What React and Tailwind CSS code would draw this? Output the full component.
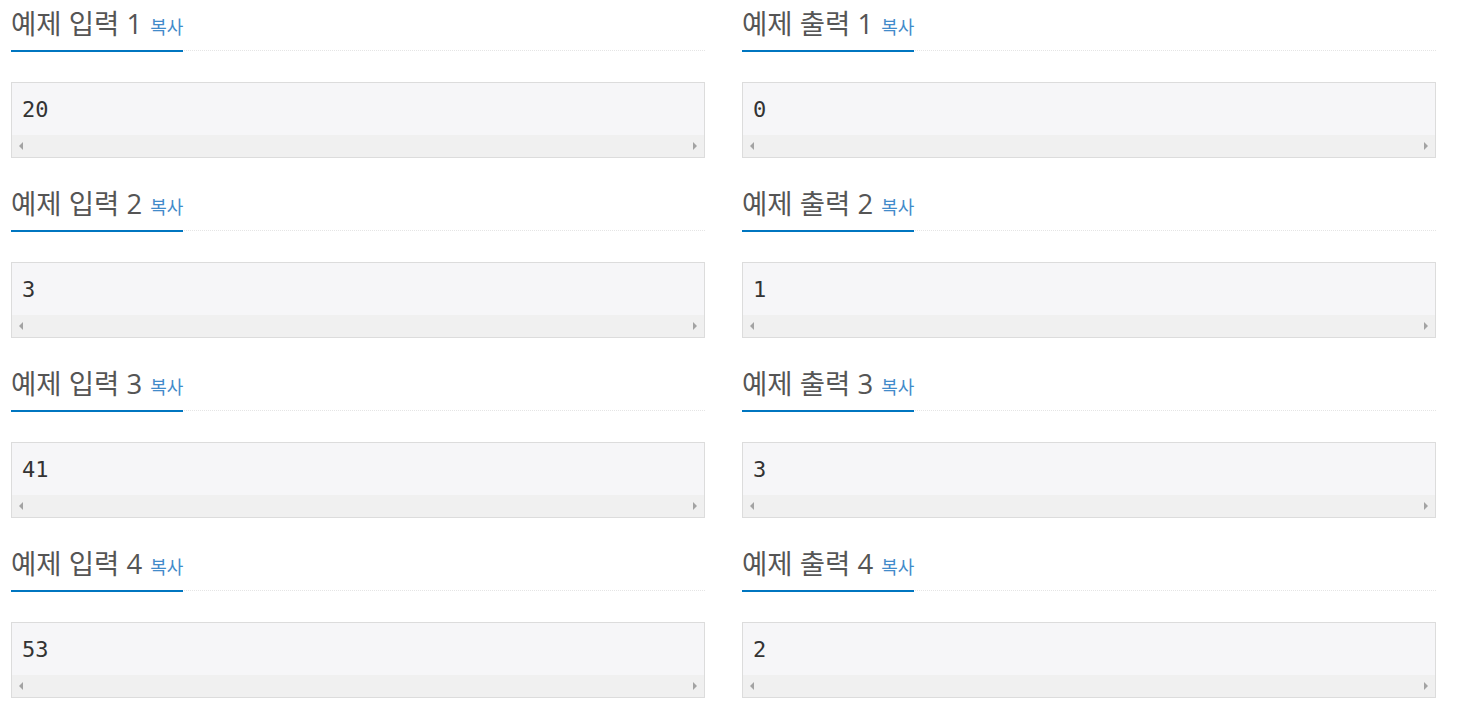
const samples = [
  { input: "20", output: "0" },
  { input: "3", output: "1" },
  { input: "41", output: "3" },
  { input: "53", output: "2" },
];

function Headline({ title }) {
  return (
    <div className="flex items-end h-[51px] border-b border-dotted border-[#e5e5e5]">
      <h2 className="flex items-baseline border-b-[2px] border-[#0076c0] -mb-[2px] pb-[9px]">
        <span className="text-[27.5px] leading-[32px] text-[#555]">{title}</span>
        <span className="ml-[8px] text-[18px] text-[#428bca]">복사</span>
      </h2>
    </div>
  );
}

function Pre({ text }) {
  return (
    <div className="mt-[31px] border border-[#dcdcdc] bg-[#f6f6f8]">
      <div
        className="h-[52px] pl-[10px] pt-[13px] text-[22px] leading-[28px] text-[#333]"
        style={{ fontFamily: '"DejaVu Sans Mono", "Liberation Mono", monospace' }}
      >
        {text}
      </div>
      <div className="flex items-center justify-between h-[22px] bg-[#f0f0f0] px-[7px]">
        <svg width="4" height="8" viewBox="0 0 4 8">
          <path d="M4 0 L0 4 L4 8 Z" fill="#a3a3a3" />
        </svg>
        <svg width="4" height="8" viewBox="0 0 4 8">
          <path d="M0 0 L4 4 L0 8 Z" fill="#a3a3a3" />
        </svg>
      </div>
    </div>
  );
}

export default function App() {
  return (
    <div
      className="bg-white w-[1461px] h-[724px] pl-[11px] pr-[25px]"
      style={{ fontFamily: '"Open Sans", "Noto Sans CJK KR", sans-serif' }}
    >
      <div className="grid grid-cols-2 gap-x-[37px]">
        {samples.map((s, i) => (
          <div key={i} className="contents">
            <div className="mb-[22px]">
              <Headline title={`예제 입력 ${i + 1}`} />
              <Pre text={s.input} />
            </div>
            <div className="mb-[22px]">
              <Headline title={`예제 출력 ${i + 1}`} />
              <Pre text={s.output} />
            </div>
          </div>
        ))}
      </div>
    </div>
  );
}
